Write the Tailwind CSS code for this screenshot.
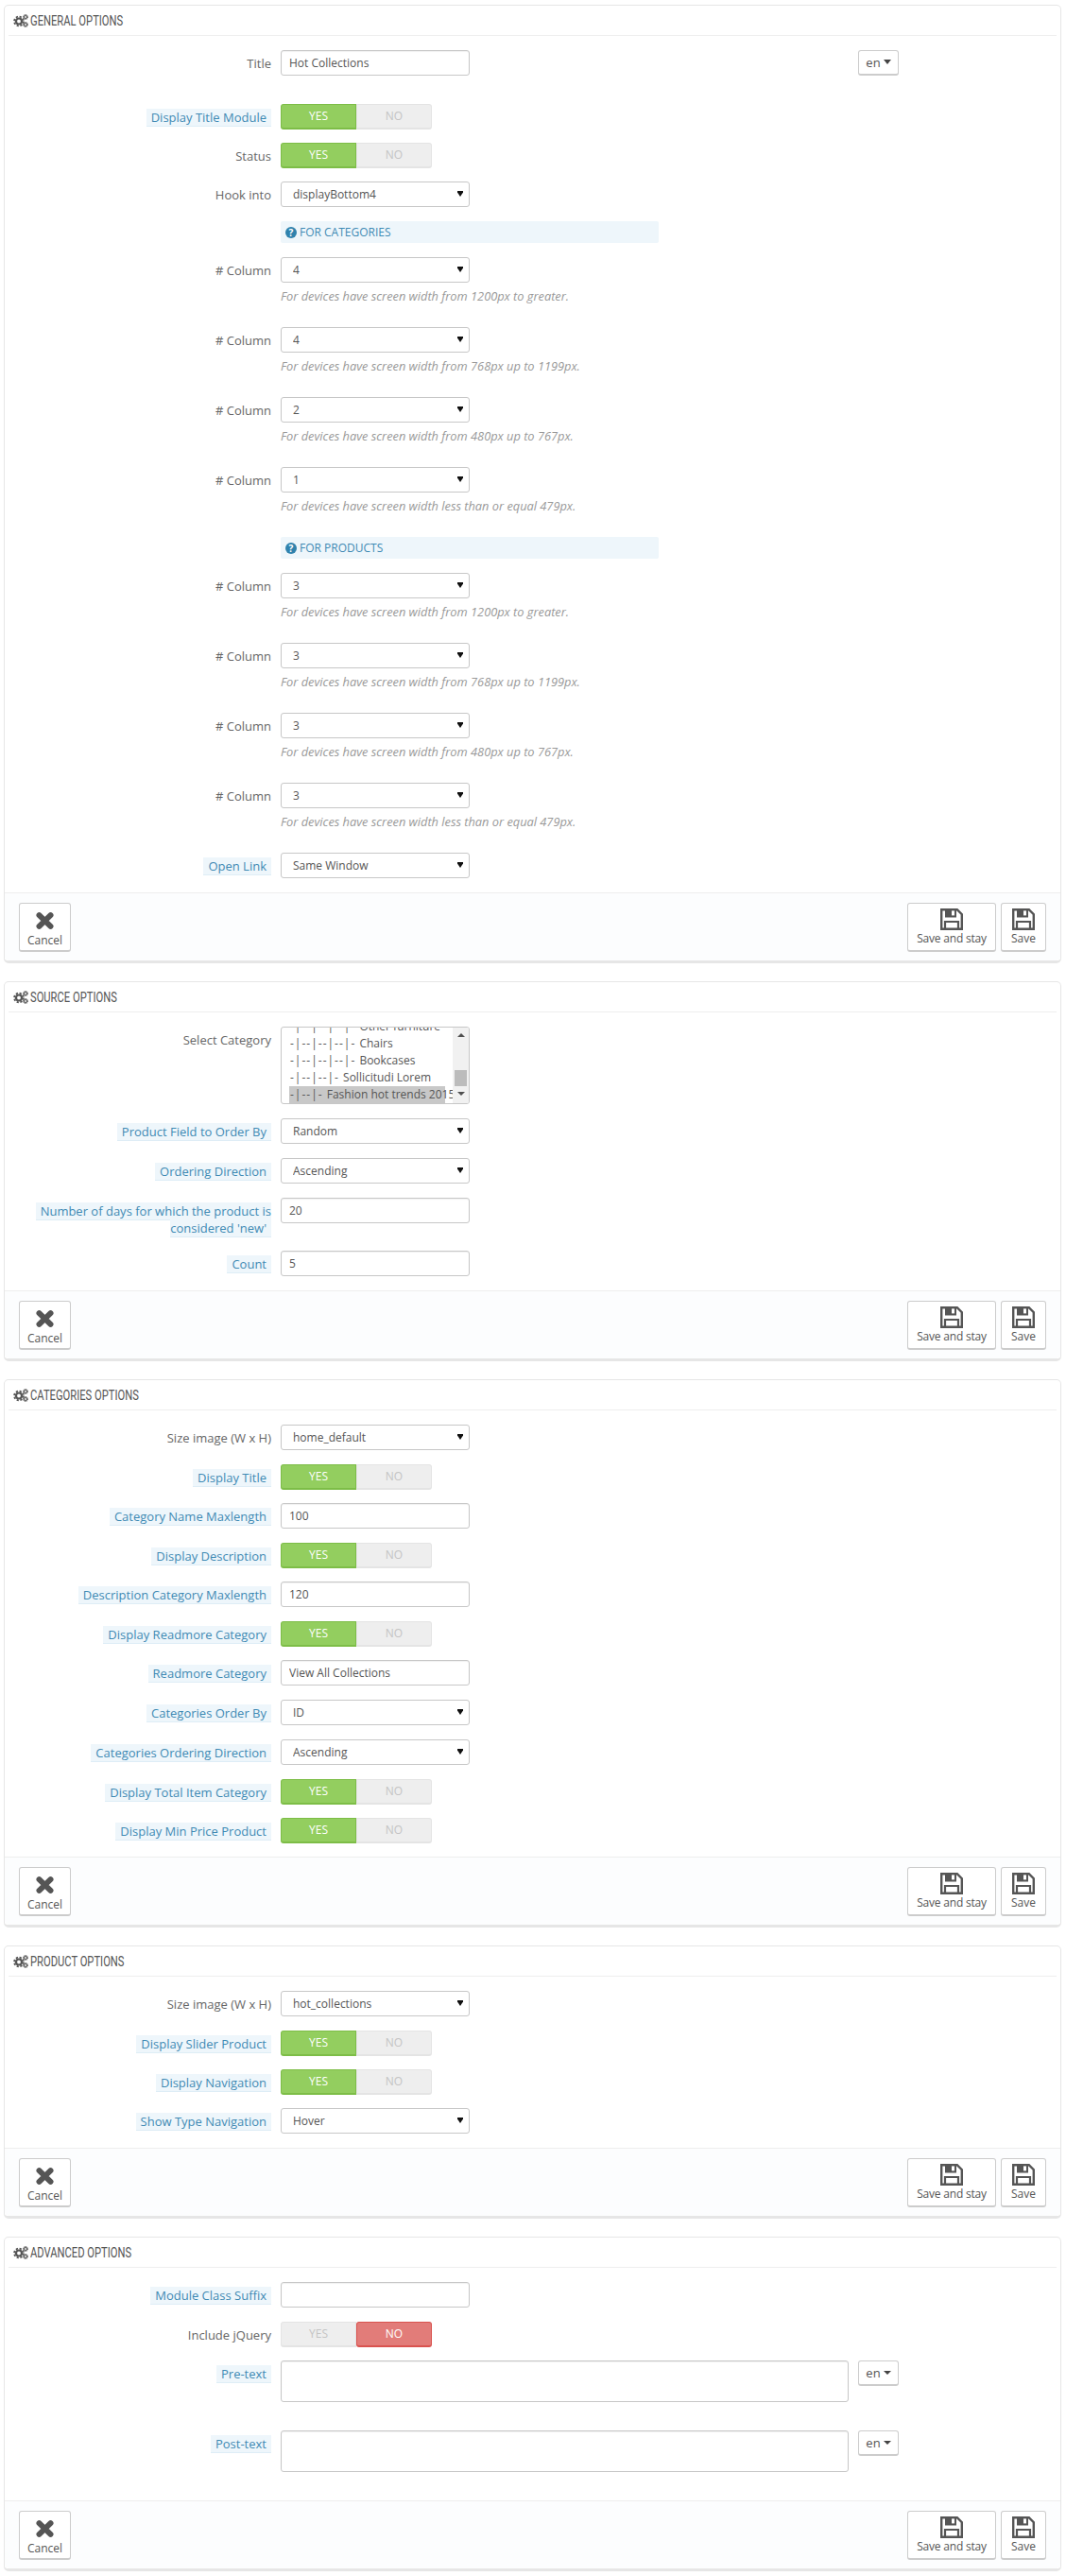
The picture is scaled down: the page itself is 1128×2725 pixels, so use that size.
<!DOCTYPE html>
<html lang="en">
<head>
  <meta charset="UTF-8" />
  <title>Hot Collections</title>
  <script src="https://cdn.jsdelivr.net/npm/@tailwindcss/browser@4"></script>
</head>
<body class="bg-white font-['Open_Sans',sans-serif] text-[13px] leading-[18px] text-[#666]">

<!-- shared icons -->
<svg class="hidden">
  <symbol id="cogs" viewBox="0 0 16 14">
    <g fill="none" stroke="#555">
      <circle cx="6" cy="7.5" r="3" stroke-width="2.2" />
      <circle cx="6" cy="7.5" r="4.9" stroke-width="1.8" stroke-dasharray="2.2 1.65" />
      <circle cx="13" cy="3" r="1.5" stroke-width="1.2" />
      <circle cx="13" cy="3" r="2.5" stroke-width="1" stroke-dasharray="1.2 .76" />
      <circle cx="13" cy="11" r="1.5" stroke-width="1.2" />
      <circle cx="13" cy="11" r="2.5" stroke-width="1" stroke-dasharray="1.2 .76" />
    </g>
  </symbol>
  <symbol id="times" viewBox="0 0 19 18">
    <path d="M3.5 3.2 15.5 14.8M15.5 3.2 3.5 14.8" fill="none" stroke="#555" stroke-width="6" stroke-linecap="round" />
  </symbol>
  <symbol id="save" viewBox="0 0 24 23">
    <path d="M1.2 1.2h16.6l5 5v15.6H1.2z" fill="none" stroke="#555" stroke-width="2.4" />
    <path d="M5 1h12v8.5H5z" fill="#555" />
    <path d="M12 2.4h3v5h-3z" fill="#fff" />
    <path d="M5 14h14v8H5z" fill="none" stroke="#555" stroke-width="2.2" />
  </symbol>
  <symbol id="arrow" viewBox="0 0 6 6">
    <path d="M0 0h6v1.5L3 6 0 1.5z" fill="#111" />
  </symbol>
</svg>

<main class="pt-[5px] pb-[5px]">

  <!-- General options -->
  <section class="ml-[4px] mb-[19px] w-[1119px] rounded-[5px] border-x border-t border-b-[3px] border-[#e6e6e6] bg-white">
    <h3 class="mx-[4px] flex h-[32px] items-center gap-[2px] border-b border-[#eeeeee] pl-[5px] font-['Roboto',sans-serif] text-[14px] text-[#555]"><svg class="h-[14px] w-[16px]"><use href="#cogs" /></svg><span class="origin-left scale-x-[.8] whitespace-nowrap">GENERAL OPTIONS</span></h3>
    <div class="pt-[15px]">
      <div class="mb-[30px] flex gap-[10px] pl-[28px]">
        <label class="w-[254px] shrink-0 pt-[5px] text-right">Title</label>
        <input class="h-[27px] w-[200px] rounded-[3px] border border-[#c7c7c7] pl-[8px] text-[12px] text-[#555] shadow-[inset_0_1px_1px_rgba(0,0,0,0.06)]" value="Hot Collections" />
        <button class="ml-[401px] flex h-[27px] w-[43px] items-center justify-center gap-[3px] rounded-[3px] border border-b-2 border-[#cccccc] text-[#555]">en<span class="mt-[-2px] h-0 w-0 border-x-[4px] border-t-[5px] border-x-transparent border-t-[#444]"></span></button>
      </div>
      <div class="mb-[15px] flex gap-[10px] pl-[28px]">
        <div class="w-[254px] shrink-0 pt-[5px] text-right"><span class="border-b border-[#deedf6] bg-[#eef6fb] px-[5px] text-[#3f8ab4]">Display Title Module</span></div>
        <div class="grid h-[26px] w-[160px] grid-cols-2 text-center text-[12px] leading-[24px]">
          <span class="rounded-l-[3px] border border-b-2 border-[#7dbd47] bg-[#93ce5f] text-white">YES</span>
          <span class="rounded-r-[3px] border border-b-2 border-[#e4e4e4] bg-[#eeeeee] text-[#c4c4c4]">NO</span>
        </div>
      </div>
      <div class="mb-[15px] flex gap-[10px] pl-[28px]">
        <label class="w-[254px] shrink-0 pt-[5px] text-right">Status</label>
        <div class="grid h-[26px] w-[160px] grid-cols-2 text-center text-[12px] leading-[24px]">
          <span class="rounded-l-[3px] border border-b-2 border-[#7dbd47] bg-[#93ce5f] text-white">YES</span>
          <span class="rounded-r-[3px] border border-b-2 border-[#e4e4e4] bg-[#eeeeee] text-[#c4c4c4]">NO</span>
        </div>
      </div>
      <div class="mb-[15px] flex gap-[10px] pl-[28px]">
        <label class="w-[254px] shrink-0 pt-[5px] text-right">Hook into</label>
        <div class="relative h-[27px] w-[200px]"><select class="h-[27px] w-[200px] appearance-none rounded-[3px] border border-[#c7c7c7] bg-white pl-[12px] text-[12px] text-[#555]"><option>displayBottom4</option></select><svg class="absolute right-[7px] top-[10px] h-[6px] w-[6px]"><use href="#arrow" /></svg></div>
      </div>
      <div class="mb-[15px] flex gap-[10px] pl-[28px]">
        <div class="w-[254px] shrink-0"></div>
        <div class="flex h-[23px] w-[400px] items-center rounded-[2px] bg-[#eef6fb] pl-[5px] text-[12px] text-[#3f8ab4]"><span class="mr-[3px] flex h-[12px] w-[12px] items-center justify-center rounded-full bg-[#2f82ad] text-[10px] font-bold leading-none text-white">?</span>FOR CATEGORIES</div>
      </div>
      <div class="flex gap-[10px] pl-[28px]">
        <label class="w-[254px] shrink-0 pt-[5px] text-right"># Column</label>
        <div class="mb-[9px]">
          <div class="relative h-[27px] w-[200px]"><select class="h-[27px] w-[200px] appearance-none rounded-[3px] border border-[#c7c7c7] bg-white pl-[12px] text-[12px] text-[#555]"><option>4</option></select><svg class="absolute right-[7px] top-[10px] h-[6px] w-[6px]"><use href="#arrow" /></svg></div>
          <p class="mt-[5px] mb-[15px] whitespace-nowrap text-[12.8px] italic text-[#999]">For devices have screen width from 1200px to greater.</p>
        </div>
      </div>
      <div class="flex gap-[10px] pl-[28px]">
        <label class="w-[254px] shrink-0 pt-[5px] text-right"># Column</label>
        <div class="mb-[9px]">
          <div class="relative h-[27px] w-[200px]"><select class="h-[27px] w-[200px] appearance-none rounded-[3px] border border-[#c7c7c7] bg-white pl-[12px] text-[12px] text-[#555]"><option>4</option></select><svg class="absolute right-[7px] top-[10px] h-[6px] w-[6px]"><use href="#arrow" /></svg></div>
          <p class="mt-[5px] mb-[15px] whitespace-nowrap text-[12.8px] italic text-[#999]">For devices have screen width from 768px up to 1199px.</p>
        </div>
      </div>
      <div class="flex gap-[10px] pl-[28px]">
        <label class="w-[254px] shrink-0 pt-[5px] text-right"># Column</label>
        <div class="mb-[9px]">
          <div class="relative h-[27px] w-[200px]"><select class="h-[27px] w-[200px] appearance-none rounded-[3px] border border-[#c7c7c7] bg-white pl-[12px] text-[12px] text-[#555]"><option>2</option></select><svg class="absolute right-[7px] top-[10px] h-[6px] w-[6px]"><use href="#arrow" /></svg></div>
          <p class="mt-[5px] mb-[15px] whitespace-nowrap text-[12.8px] italic text-[#999]">For devices have screen width from 480px up to 767px.</p>
        </div>
      </div>
      <div class="flex gap-[10px] pl-[28px]">
        <label class="w-[254px] shrink-0 pt-[5px] text-right"># Column</label>
        <div class="mb-[9px]">
          <div class="relative h-[27px] w-[200px]"><select class="h-[27px] w-[200px] appearance-none rounded-[3px] border border-[#c7c7c7] bg-white pl-[12px] text-[12px] text-[#555]"><option>1</option></select><svg class="absolute right-[7px] top-[10px] h-[6px] w-[6px]"><use href="#arrow" /></svg></div>
          <p class="mt-[5px] mb-[15px] whitespace-nowrap text-[12.8px] italic text-[#999]">For devices have screen width less than or equal 479px.</p>
        </div>
      </div>
      <div class="mb-[15px] flex gap-[10px] pl-[28px]">
        <div class="w-[254px] shrink-0"></div>
        <div class="flex h-[23px] w-[400px] items-center rounded-[2px] bg-[#eef6fb] pl-[5px] text-[12px] text-[#3f8ab4]"><span class="mr-[3px] flex h-[12px] w-[12px] items-center justify-center rounded-full bg-[#2f82ad] text-[10px] font-bold leading-none text-white">?</span>FOR PRODUCTS</div>
      </div>
      <div class="flex gap-[10px] pl-[28px]">
        <label class="w-[254px] shrink-0 pt-[5px] text-right"># Column</label>
        <div class="mb-[9px]">
          <div class="relative h-[27px] w-[200px]"><select class="h-[27px] w-[200px] appearance-none rounded-[3px] border border-[#c7c7c7] bg-white pl-[12px] text-[12px] text-[#555]"><option>3</option></select><svg class="absolute right-[7px] top-[10px] h-[6px] w-[6px]"><use href="#arrow" /></svg></div>
          <p class="mt-[5px] mb-[15px] whitespace-nowrap text-[12.8px] italic text-[#999]">For devices have screen width from 1200px to greater.</p>
        </div>
      </div>
      <div class="flex gap-[10px] pl-[28px]">
        <label class="w-[254px] shrink-0 pt-[5px] text-right"># Column</label>
        <div class="mb-[9px]">
          <div class="relative h-[27px] w-[200px]"><select class="h-[27px] w-[200px] appearance-none rounded-[3px] border border-[#c7c7c7] bg-white pl-[12px] text-[12px] text-[#555]"><option>3</option></select><svg class="absolute right-[7px] top-[10px] h-[6px] w-[6px]"><use href="#arrow" /></svg></div>
          <p class="mt-[5px] mb-[15px] whitespace-nowrap text-[12.8px] italic text-[#999]">For devices have screen width from 768px up to 1199px.</p>
        </div>
      </div>
      <div class="flex gap-[10px] pl-[28px]">
        <label class="w-[254px] shrink-0 pt-[5px] text-right"># Column</label>
        <div class="mb-[9px]">
          <div class="relative h-[27px] w-[200px]"><select class="h-[27px] w-[200px] appearance-none rounded-[3px] border border-[#c7c7c7] bg-white pl-[12px] text-[12px] text-[#555]"><option>3</option></select><svg class="absolute right-[7px] top-[10px] h-[6px] w-[6px]"><use href="#arrow" /></svg></div>
          <p class="mt-[5px] mb-[15px] whitespace-nowrap text-[12.8px] italic text-[#999]">For devices have screen width from 480px up to 767px.</p>
        </div>
      </div>
      <div class="flex gap-[10px] pl-[28px]">
        <label class="w-[254px] shrink-0 pt-[5px] text-right"># Column</label>
        <div class="mb-[9px]">
          <div class="relative h-[27px] w-[200px]"><select class="h-[27px] w-[200px] appearance-none rounded-[3px] border border-[#c7c7c7] bg-white pl-[12px] text-[12px] text-[#555]"><option>3</option></select><svg class="absolute right-[7px] top-[10px] h-[6px] w-[6px]"><use href="#arrow" /></svg></div>
          <p class="mt-[5px] mb-[15px] whitespace-nowrap text-[12.8px] italic text-[#999]">For devices have screen width less than or equal 479px.</p>
        </div>
      </div>
      <div class="mb-[15px] flex gap-[10px] pl-[28px]">
        <div class="w-[254px] shrink-0 pt-[5px] text-right"><span class="border-b border-[#deedf6] bg-[#eef6fb] px-[5px] text-[#3f8ab4]">Open Link</span></div>
        <div class="relative h-[27px] w-[200px]"><select class="h-[27px] w-[200px] appearance-none rounded-[3px] border border-[#c7c7c7] bg-white pl-[12px] text-[12px] text-[#555]"><option>Same Window</option></select><svg class="absolute right-[7px] top-[10px] h-[6px] w-[6px]"><use href="#arrow" /></svg></div>
      </div>
    </div>
    <footer class="flex items-start justify-between rounded-b-[5px] border-t border-[#eeeeee] bg-[#fcfdfe] px-[15px] pt-[10px] pb-[9px] text-[12px]">
      <button class="flex h-[52px] w-[55px] flex-col items-center rounded-[3px] border border-b-2 border-[#cccccc] bg-white pt-[9px] text-[#555]"><svg class="mb-[3px] h-[18px] w-[19px]"><use href="#times" /></svg>Cancel</button>
      <div class="flex gap-[5px]">
        <button class="flex h-[52px] w-[94px] flex-col items-center rounded-[3px] border border-b-2 border-[#cccccc] bg-white pt-[5px] tracking-[-0.2px] text-[#555]"><svg class="h-[23px] w-[24px]"><use href="#save" /></svg>Save and stay</button>
        <button class="flex h-[52px] w-[48px] flex-col items-center rounded-[3px] border border-b-2 border-[#cccccc] bg-white pt-[5px] text-[#555]"><svg class="h-[23px] w-[24px]"><use href="#save" /></svg>Save</button>
      </div>
    </footer>
  </section>

  <!-- Source options -->
  <section class="ml-[4px] mb-[19px] w-[1119px] rounded-[5px] border-x border-t border-b-[3px] border-[#e6e6e6] bg-white">
    <h3 class="mx-[4px] flex h-[32px] items-center gap-[2px] border-b border-[#eeeeee] pl-[5px] font-['Roboto',sans-serif] text-[14px] text-[#555]"><svg class="h-[14px] w-[16px]"><use href="#cogs" /></svg><span class="origin-left scale-x-[.8] whitespace-nowrap">SOURCE OPTIONS</span></h3>
    <div class="pt-[15px]">
      <div class="mb-[15px] flex gap-[10px] pl-[28px]">
        <label class="w-[254px] shrink-0 pt-[5px] text-right">Select Category</label>
        <div class="relative h-[82px] w-[200px] overflow-hidden rounded-[3px] border border-[#c7c7c7] text-[12px] text-[#555]">
          <div class="mt-[-10px] pl-[9px] whitespace-nowrap">
            <div><span class="tracking-[1px]">-|--|--|--|- </span>Other furniture</div>
            <div><span class="tracking-[1px]">-|--|--|--|- </span>Chairs</div>
            <div><span class="tracking-[1px]">-|--|--|--|- </span>Bookcases</div>
            <div><span class="tracking-[1px]">-|--|--|- </span>Sollicitudi Lorem</div>
            <div class="-ml-[1px] w-[165px] bg-[#c8c8c8] pl-[1px]"><span class="tracking-[1px]">-|--|- </span>Fashion hot trends 2015</div>
          </div>
          <div class="absolute inset-y-0 right-0 flex w-[17px] flex-col items-center bg-[#f1f1f1]">
            <span class="mt-[6px] h-0 w-0 border-x-[4px] border-b-[4px] border-x-transparent border-b-[#505050]"></span>
            <span class="mt-[35px] h-[17px] w-[13px] bg-[#bcbcbc]"></span>
            <span class="mt-[6px] h-0 w-0 border-x-[4px] border-t-[4px] border-x-transparent border-t-[#505050]"></span>
          </div>
        </div>
      </div>
      <div class="mb-[15px] flex gap-[10px] pl-[28px]">
        <div class="w-[254px] shrink-0 pt-[5px] text-right"><span class="border-b border-[#deedf6] bg-[#eef6fb] px-[5px] text-[#3f8ab4]">Product Field to Order By</span></div>
        <div class="relative h-[27px] w-[200px]"><select class="h-[27px] w-[200px] appearance-none rounded-[3px] border border-[#c7c7c7] bg-white pl-[12px] text-[12px] text-[#555]"><option>Random</option></select><svg class="absolute right-[7px] top-[10px] h-[6px] w-[6px]"><use href="#arrow" /></svg></div>
      </div>
      <div class="mb-[15px] flex gap-[10px] pl-[28px]">
        <div class="w-[254px] shrink-0 pt-[5px] text-right"><span class="border-b border-[#deedf6] bg-[#eef6fb] px-[5px] text-[#3f8ab4]">Ordering Direction</span></div>
        <div class="relative h-[27px] w-[200px]"><select class="h-[27px] w-[200px] appearance-none rounded-[3px] border border-[#c7c7c7] bg-white pl-[12px] text-[12px] text-[#555]"><option>Ascending</option></select><svg class="absolute right-[7px] top-[10px] h-[6px] w-[6px]"><use href="#arrow" /></svg></div>
      </div>
      <div class="mb-[15px] flex gap-[10px] pl-[28px]">
        <div class="w-[254px] shrink-0 pt-[5px] text-right"><span class="border-b border-[#deedf6] bg-[#eef6fb] px-[5px] text-[#3f8ab4]">Number of days for which the product is considered 'new'</span></div>
        <input class="h-[27px] w-[200px] rounded-[3px] border border-[#c7c7c7] pl-[8px] text-[12px] text-[#555] shadow-[inset_0_1px_1px_rgba(0,0,0,0.06)]" value="20" />
      </div>
      <div class="mb-[15px] flex gap-[10px] pl-[28px]">
        <div class="w-[254px] shrink-0 pt-[5px] text-right"><span class="border-b border-[#deedf6] bg-[#eef6fb] px-[5px] text-[#3f8ab4]">Count</span></div>
        <input class="h-[27px] w-[200px] rounded-[3px] border border-[#c7c7c7] pl-[8px] text-[12px] text-[#555] shadow-[inset_0_1px_1px_rgba(0,0,0,0.06)]" value="5" />
      </div>
    </div>
    <footer class="flex items-start justify-between rounded-b-[5px] border-t border-[#eeeeee] bg-[#fcfdfe] px-[15px] pt-[10px] pb-[9px] text-[12px]">
      <button class="flex h-[52px] w-[55px] flex-col items-center rounded-[3px] border border-b-2 border-[#cccccc] bg-white pt-[9px] text-[#555]"><svg class="mb-[3px] h-[18px] w-[19px]"><use href="#times" /></svg>Cancel</button>
      <div class="flex gap-[5px]">
        <button class="flex h-[52px] w-[94px] flex-col items-center rounded-[3px] border border-b-2 border-[#cccccc] bg-white pt-[5px] tracking-[-0.2px] text-[#555]"><svg class="h-[23px] w-[24px]"><use href="#save" /></svg>Save and stay</button>
        <button class="flex h-[52px] w-[48px] flex-col items-center rounded-[3px] border border-b-2 border-[#cccccc] bg-white pt-[5px] text-[#555]"><svg class="h-[23px] w-[24px]"><use href="#save" /></svg>Save</button>
      </div>
    </footer>
  </section>

  <!-- Categories options -->
  <section class="ml-[4px] mb-[19px] w-[1119px] rounded-[5px] border-x border-t border-b-[3px] border-[#e6e6e6] bg-white">
    <h3 class="mx-[4px] flex h-[32px] items-center gap-[2px] border-b border-[#eeeeee] pl-[5px] font-['Roboto',sans-serif] text-[14px] text-[#555]"><svg class="h-[14px] w-[16px]"><use href="#cogs" /></svg><span class="origin-left scale-x-[.8] whitespace-nowrap">CATEGORIES OPTIONS</span></h3>
    <div class="pt-[15px]">
      <div class="mb-[15px] flex gap-[10px] pl-[28px]">
        <label class="w-[254px] shrink-0 pt-[5px] text-right">Size image (W x H)</label>
        <div class="relative h-[27px] w-[200px]"><select class="h-[27px] w-[200px] appearance-none rounded-[3px] border border-[#c7c7c7] bg-white pl-[12px] text-[12px] text-[#555]"><option>home_default</option></select><svg class="absolute right-[7px] top-[10px] h-[6px] w-[6px]"><use href="#arrow" /></svg></div>
      </div>
      <div class="mb-[15px] flex gap-[10px] pl-[28px]">
        <div class="w-[254px] shrink-0 pt-[5px] text-right"><span class="border-b border-[#deedf6] bg-[#eef6fb] px-[5px] text-[#3f8ab4]">Display Title</span></div>
        <div class="grid h-[26px] w-[160px] grid-cols-2 text-center text-[12px] leading-[24px]">
          <span class="rounded-l-[3px] border border-b-2 border-[#7dbd47] bg-[#93ce5f] text-white">YES</span>
          <span class="rounded-r-[3px] border border-b-2 border-[#e4e4e4] bg-[#eeeeee] text-[#c4c4c4]">NO</span>
        </div>
      </div>
      <div class="mb-[15px] flex gap-[10px] pl-[28px]">
        <div class="w-[254px] shrink-0 pt-[5px] text-right"><span class="border-b border-[#deedf6] bg-[#eef6fb] px-[5px] text-[#3f8ab4]">Category Name Maxlength</span></div>
        <input class="h-[27px] w-[200px] rounded-[3px] border border-[#c7c7c7] pl-[8px] text-[12px] text-[#555] shadow-[inset_0_1px_1px_rgba(0,0,0,0.06)]" value="100" />
      </div>
      <div class="mb-[15px] flex gap-[10px] pl-[28px]">
        <div class="w-[254px] shrink-0 pt-[5px] text-right"><span class="border-b border-[#deedf6] bg-[#eef6fb] px-[5px] text-[#3f8ab4]">Display Description</span></div>
        <div class="grid h-[26px] w-[160px] grid-cols-2 text-center text-[12px] leading-[24px]">
          <span class="rounded-l-[3px] border border-b-2 border-[#7dbd47] bg-[#93ce5f] text-white">YES</span>
          <span class="rounded-r-[3px] border border-b-2 border-[#e4e4e4] bg-[#eeeeee] text-[#c4c4c4]">NO</span>
        </div>
      </div>
      <div class="mb-[15px] flex gap-[10px] pl-[28px]">
        <div class="w-[254px] shrink-0 pt-[5px] text-right"><span class="border-b border-[#deedf6] bg-[#eef6fb] px-[5px] text-[#3f8ab4]">Description Category Maxlength</span></div>
        <input class="h-[27px] w-[200px] rounded-[3px] border border-[#c7c7c7] pl-[8px] text-[12px] text-[#555] shadow-[inset_0_1px_1px_rgba(0,0,0,0.06)]" value="120" />
      </div>
      <div class="mb-[15px] flex gap-[10px] pl-[28px]">
        <div class="w-[254px] shrink-0 pt-[5px] text-right"><span class="border-b border-[#deedf6] bg-[#eef6fb] px-[5px] text-[#3f8ab4]">Display Readmore Category</span></div>
        <div class="grid h-[26px] w-[160px] grid-cols-2 text-center text-[12px] leading-[24px]">
          <span class="rounded-l-[3px] border border-b-2 border-[#7dbd47] bg-[#93ce5f] text-white">YES</span>
          <span class="rounded-r-[3px] border border-b-2 border-[#e4e4e4] bg-[#eeeeee] text-[#c4c4c4]">NO</span>
        </div>
      </div>
      <div class="mb-[15px] flex gap-[10px] pl-[28px]">
        <div class="w-[254px] shrink-0 pt-[5px] text-right"><span class="border-b border-[#deedf6] bg-[#eef6fb] px-[5px] text-[#3f8ab4]">Readmore Category</span></div>
        <input class="h-[27px] w-[200px] rounded-[3px] border border-[#c7c7c7] pl-[8px] text-[12px] text-[#555] shadow-[inset_0_1px_1px_rgba(0,0,0,0.06)]" value="View All Collections" />
      </div>
      <div class="mb-[15px] flex gap-[10px] pl-[28px]">
        <div class="w-[254px] shrink-0 pt-[5px] text-right"><span class="border-b border-[#deedf6] bg-[#eef6fb] px-[5px] text-[#3f8ab4]">Categories Order By</span></div>
        <div class="relative h-[27px] w-[200px]"><select class="h-[27px] w-[200px] appearance-none rounded-[3px] border border-[#c7c7c7] bg-white pl-[12px] text-[12px] text-[#555]"><option>ID</option></select><svg class="absolute right-[7px] top-[10px] h-[6px] w-[6px]"><use href="#arrow" /></svg></div>
      </div>
      <div class="mb-[15px] flex gap-[10px] pl-[28px]">
        <div class="w-[254px] shrink-0 pt-[5px] text-right"><span class="border-b border-[#deedf6] bg-[#eef6fb] px-[5px] text-[#3f8ab4]">Categories Ordering Direction</span></div>
        <div class="relative h-[27px] w-[200px]"><select class="h-[27px] w-[200px] appearance-none rounded-[3px] border border-[#c7c7c7] bg-white pl-[12px] text-[12px] text-[#555]"><option>Ascending</option></select><svg class="absolute right-[7px] top-[10px] h-[6px] w-[6px]"><use href="#arrow" /></svg></div>
      </div>
      <div class="mb-[15px] flex gap-[10px] pl-[28px]">
        <div class="w-[254px] shrink-0 pt-[5px] text-right"><span class="border-b border-[#deedf6] bg-[#eef6fb] px-[5px] text-[#3f8ab4]">Display Total Item Category</span></div>
        <div class="grid h-[26px] w-[160px] grid-cols-2 text-center text-[12px] leading-[24px]">
          <span class="rounded-l-[3px] border border-b-2 border-[#7dbd47] bg-[#93ce5f] text-white">YES</span>
          <span class="rounded-r-[3px] border border-b-2 border-[#e4e4e4] bg-[#eeeeee] text-[#c4c4c4]">NO</span>
        </div>
      </div>
      <div class="mb-[15px] flex gap-[10px] pl-[28px]">
        <div class="w-[254px] shrink-0 pt-[5px] text-right"><span class="border-b border-[#deedf6] bg-[#eef6fb] px-[5px] text-[#3f8ab4]">Display Min Price Product</span></div>
        <div class="grid h-[26px] w-[160px] grid-cols-2 text-center text-[12px] leading-[24px]">
          <span class="rounded-l-[3px] border border-b-2 border-[#7dbd47] bg-[#93ce5f] text-white">YES</span>
          <span class="rounded-r-[3px] border border-b-2 border-[#e4e4e4] bg-[#eeeeee] text-[#c4c4c4]">NO</span>
        </div>
      </div>
    </div>
    <footer class="flex items-start justify-between rounded-b-[5px] border-t border-[#eeeeee] bg-[#fcfdfe] px-[15px] pt-[10px] pb-[9px] text-[12px]">
      <button class="flex h-[52px] w-[55px] flex-col items-center rounded-[3px] border border-b-2 border-[#cccccc] bg-white pt-[9px] text-[#555]"><svg class="mb-[3px] h-[18px] w-[19px]"><use href="#times" /></svg>Cancel</button>
      <div class="flex gap-[5px]">
        <button class="flex h-[52px] w-[94px] flex-col items-center rounded-[3px] border border-b-2 border-[#cccccc] bg-white pt-[5px] tracking-[-0.2px] text-[#555]"><svg class="h-[23px] w-[24px]"><use href="#save" /></svg>Save and stay</button>
        <button class="flex h-[52px] w-[48px] flex-col items-center rounded-[3px] border border-b-2 border-[#cccccc] bg-white pt-[5px] text-[#555]"><svg class="h-[23px] w-[24px]"><use href="#save" /></svg>Save</button>
      </div>
    </footer>
  </section>

  <!-- Product options -->
  <section class="ml-[4px] mb-[19px] w-[1119px] rounded-[5px] border-x border-t border-b-[3px] border-[#e6e6e6] bg-white">
    <h3 class="mx-[4px] flex h-[32px] items-center gap-[2px] border-b border-[#eeeeee] pl-[5px] font-['Roboto',sans-serif] text-[14px] text-[#555]"><svg class="h-[14px] w-[16px]"><use href="#cogs" /></svg><span class="origin-left scale-x-[.8] whitespace-nowrap">PRODUCT OPTIONS</span></h3>
    <div class="pt-[15px]">
      <div class="mb-[15px] flex gap-[10px] pl-[28px]">
        <label class="w-[254px] shrink-0 pt-[5px] text-right">Size image (W x H)</label>
        <div class="relative h-[27px] w-[200px]"><select class="h-[27px] w-[200px] appearance-none rounded-[3px] border border-[#c7c7c7] bg-white pl-[12px] text-[12px] text-[#555]"><option>hot_collections</option></select><svg class="absolute right-[7px] top-[10px] h-[6px] w-[6px]"><use href="#arrow" /></svg></div>
      </div>
      <div class="mb-[15px] flex gap-[10px] pl-[28px]">
        <div class="w-[254px] shrink-0 pt-[5px] text-right"><span class="border-b border-[#deedf6] bg-[#eef6fb] px-[5px] text-[#3f8ab4]">Display Slider Product</span></div>
        <div class="grid h-[26px] w-[160px] grid-cols-2 text-center text-[12px] leading-[24px]">
          <span class="rounded-l-[3px] border border-b-2 border-[#7dbd47] bg-[#93ce5f] text-white">YES</span>
          <span class="rounded-r-[3px] border border-b-2 border-[#e4e4e4] bg-[#eeeeee] text-[#c4c4c4]">NO</span>
        </div>
      </div>
      <div class="mb-[15px] flex gap-[10px] pl-[28px]">
        <div class="w-[254px] shrink-0 pt-[5px] text-right"><span class="border-b border-[#deedf6] bg-[#eef6fb] px-[5px] text-[#3f8ab4]">Display Navigation</span></div>
        <div class="grid h-[26px] w-[160px] grid-cols-2 text-center text-[12px] leading-[24px]">
          <span class="rounded-l-[3px] border border-b-2 border-[#7dbd47] bg-[#93ce5f] text-white">YES</span>
          <span class="rounded-r-[3px] border border-b-2 border-[#e4e4e4] bg-[#eeeeee] text-[#c4c4c4]">NO</span>
        </div>
      </div>
      <div class="mb-[15px] flex gap-[10px] pl-[28px]">
        <div class="w-[254px] shrink-0 pt-[5px] text-right"><span class="border-b border-[#deedf6] bg-[#eef6fb] px-[5px] text-[#3f8ab4]">Show Type Navigation</span></div>
        <div class="relative h-[27px] w-[200px]"><select class="h-[27px] w-[200px] appearance-none rounded-[3px] border border-[#c7c7c7] bg-white pl-[12px] text-[12px] text-[#555]"><option>Hover</option></select><svg class="absolute right-[7px] top-[10px] h-[6px] w-[6px]"><use href="#arrow" /></svg></div>
      </div>
    </div>
    <footer class="flex items-start justify-between rounded-b-[5px] border-t border-[#eeeeee] bg-[#fcfdfe] px-[15px] pt-[10px] pb-[9px] text-[12px]">
      <button class="flex h-[52px] w-[55px] flex-col items-center rounded-[3px] border border-b-2 border-[#cccccc] bg-white pt-[9px] text-[#555]"><svg class="mb-[3px] h-[18px] w-[19px]"><use href="#times" /></svg>Cancel</button>
      <div class="flex gap-[5px]">
        <button class="flex h-[52px] w-[94px] flex-col items-center rounded-[3px] border border-b-2 border-[#cccccc] bg-white pt-[5px] tracking-[-0.2px] text-[#555]"><svg class="h-[23px] w-[24px]"><use href="#save" /></svg>Save and stay</button>
        <button class="flex h-[52px] w-[48px] flex-col items-center rounded-[3px] border border-b-2 border-[#cccccc] bg-white pt-[5px] text-[#555]"><svg class="h-[23px] w-[24px]"><use href="#save" /></svg>Save</button>
      </div>
    </footer>
  </section>

  <!-- Advanced options -->
  <section class="ml-[4px] w-[1119px] rounded-[5px] border-x border-t border-b-[3px] border-[#e6e6e6] bg-white">
    <h3 class="mx-[4px] flex h-[32px] items-center gap-[2px] border-b border-[#eeeeee] pl-[5px] font-['Roboto',sans-serif] text-[14px] text-[#555]"><svg class="h-[14px] w-[16px]"><use href="#cogs" /></svg><span class="origin-left scale-x-[.8] whitespace-nowrap">ADVANCED OPTIONS</span></h3>
    <div class="pt-[15px]">
      <div class="mb-[15px] flex gap-[10px] pl-[28px]">
        <div class="w-[254px] shrink-0 pt-[5px] text-right"><span class="border-b border-[#deedf6] bg-[#eef6fb] px-[5px] text-[#3f8ab4]">Module Class Suffix</span></div>
        <input class="h-[27px] w-[200px] rounded-[3px] border border-[#c7c7c7] pl-[8px] text-[12px] text-[#555] shadow-[inset_0_1px_1px_rgba(0,0,0,0.06)]" />
      </div>
      <div class="mb-[15px] flex gap-[10px] pl-[28px]">
        <label class="w-[254px] shrink-0 pt-[5px] text-right">Include jQuery</label>
        <div class="grid h-[26px] w-[160px] grid-cols-2 text-center text-[12px] leading-[24px]">
          <span class="rounded-l-[3px] border border-b-2 border-[#e4e4e4] bg-[#eeeeee] text-[#c4c4c4]">YES</span>
          <span class="rounded-[3px] border border-b-2 border-[#d9534f] bg-[#e27c79] text-white">NO</span>
        </div>
      </div>
      <div class="mb-[30px] flex gap-[10px] pl-[28px]">
        <div class="w-[254px] shrink-0 pt-[5px] text-right"><span class="border-b border-[#deedf6] bg-[#eef6fb] px-[5px] text-[#3f8ab4]">Pre-text</span></div>
        <textarea class="h-[44px] w-[601px] resize-none rounded-[3px] border border-[#c7c7c7] shadow-[inset_0_1px_1px_rgba(0,0,0,0.06)]"></textarea>
        <button class="flex h-[27px] w-[43px] items-center justify-center gap-[3px] rounded-[3px] border border-b-2 border-[#cccccc] text-[#555]">en<span class="h-0 w-0 border-x-[4px] border-t-[4px] border-x-transparent border-t-[#444]"></span></button>
      </div>
      <div class="mb-[30px] flex gap-[10px] pl-[28px]">
        <div class="w-[254px] shrink-0 pt-[5px] text-right"><span class="border-b border-[#deedf6] bg-[#eef6fb] px-[5px] text-[#3f8ab4]">Post-text</span></div>
        <textarea class="h-[44px] w-[601px] resize-none rounded-[3px] border border-[#c7c7c7] shadow-[inset_0_1px_1px_rgba(0,0,0,0.06)]"></textarea>
        <button class="flex h-[27px] w-[43px] items-center justify-center gap-[3px] rounded-[3px] border border-b-2 border-[#cccccc] text-[#555]">en<span class="h-0 w-0 border-x-[4px] border-t-[4px] border-x-transparent border-t-[#444]"></span></button>
      </div>
    </div>
    <footer class="flex items-start justify-between rounded-b-[5px] border-t border-[#eeeeee] bg-[#fcfdfe] px-[15px] pt-[10px] pb-[9px] text-[12px]">
      <button class="flex h-[52px] w-[55px] flex-col items-center rounded-[3px] border border-b-2 border-[#cccccc] bg-white pt-[9px] text-[#555]"><svg class="mb-[3px] h-[18px] w-[19px]"><use href="#times" /></svg>Cancel</button>
      <div class="flex gap-[5px]">
        <button class="flex h-[52px] w-[94px] flex-col items-center rounded-[3px] border border-b-2 border-[#cccccc] bg-white pt-[5px] tracking-[-0.2px] text-[#555]"><svg class="h-[23px] w-[24px]"><use href="#save" /></svg>Save and stay</button>
        <button class="flex h-[52px] w-[48px] flex-col items-center rounded-[3px] border border-b-2 border-[#cccccc] bg-white pt-[5px] text-[#555]"><svg class="h-[23px] w-[24px]"><use href="#save" /></svg>Save</button>
      </div>
    </footer>
  </section>

</main>
</body>
</html>
